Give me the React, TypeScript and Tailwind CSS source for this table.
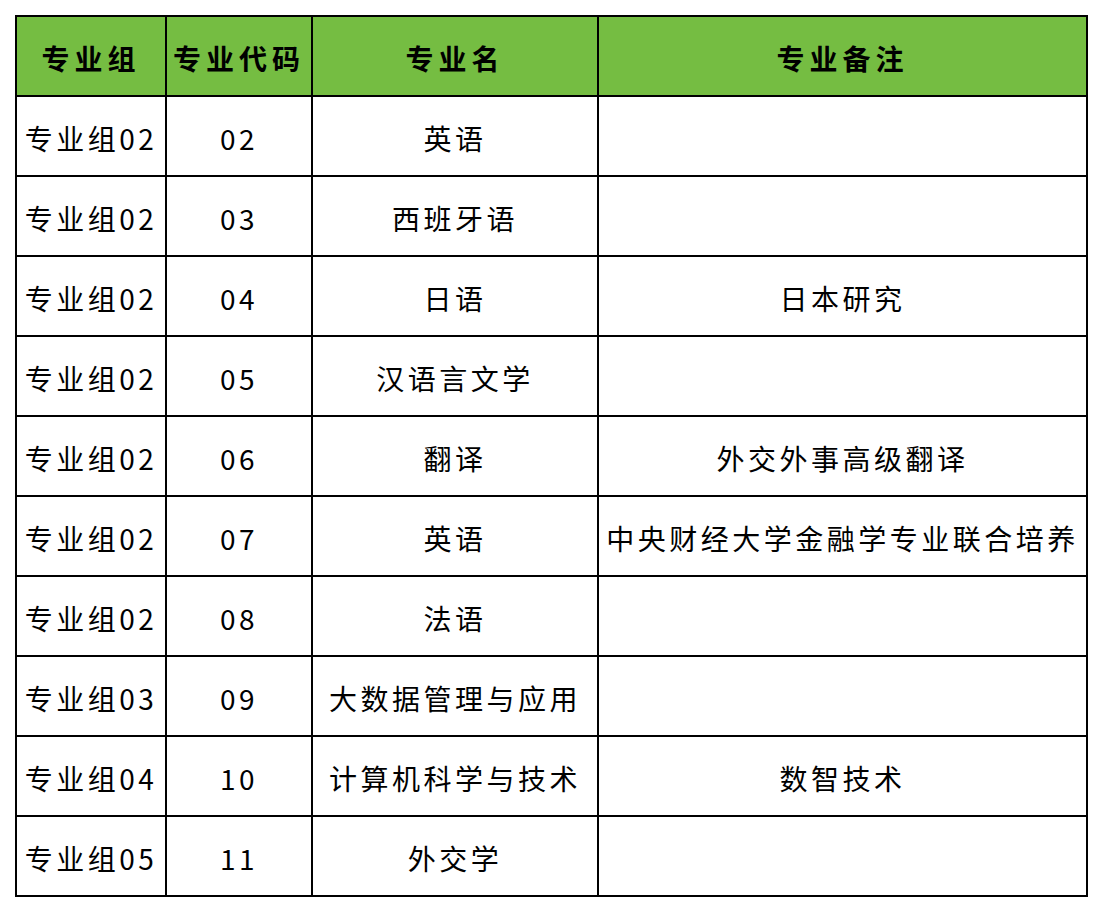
const rows: [string, string, string, string][] = [
  ["专业组02", "02", "英语", ""],
  ["专业组02", "03", "西班牙语", ""],
  ["专业组02", "04", "日语", "日本研究"],
  ["专业组02", "05", "汉语言文学", ""],
  ["专业组02", "06", "翻译", "外交外事高级翻译"],
  ["专业组02", "07", "英语", "中央财经大学金融学专业联合培养"],
  ["专业组02", "08", "法语", ""],
  ["专业组03", "09", "大数据管理与应用", ""],
  ["专业组04", "10", "计算机科学与技术", "数智技术"],
  ["专业组05", "11", "外交学", ""],
]

const headers = ["专业组", "专业代码", "专业名", "专业备注"]

const App = () => {
  return (
    <div className="w-[1104px] h-[912px] bg-white pt-[15px] pl-[15px] font-['Noto_Sans_CJK_SC',sans-serif] text-black">
      <div className="inline-grid grid-cols-[148px_144px_284px_487px] auto-rows-[78px] gap-[2px] p-[2px] bg-black">
        {headers.map((h) => (
          <div key={h} className="flex items-center justify-center pt-[4px] bg-[#75bd42] text-[28px] font-bold tracking-[5px] whitespace-nowrap">
            {h}
          </div>
        ))}
        {rows.map((r, i) =>
          r.map((c, j) => (
            <div key={i + "-" + j} className="flex items-center justify-center pt-[3px] bg-white text-[28px] tracking-[3.5px] whitespace-nowrap">
              {c}
            </div>
          ))
        )}
      </div>
    </div>
  )
}

export default App
